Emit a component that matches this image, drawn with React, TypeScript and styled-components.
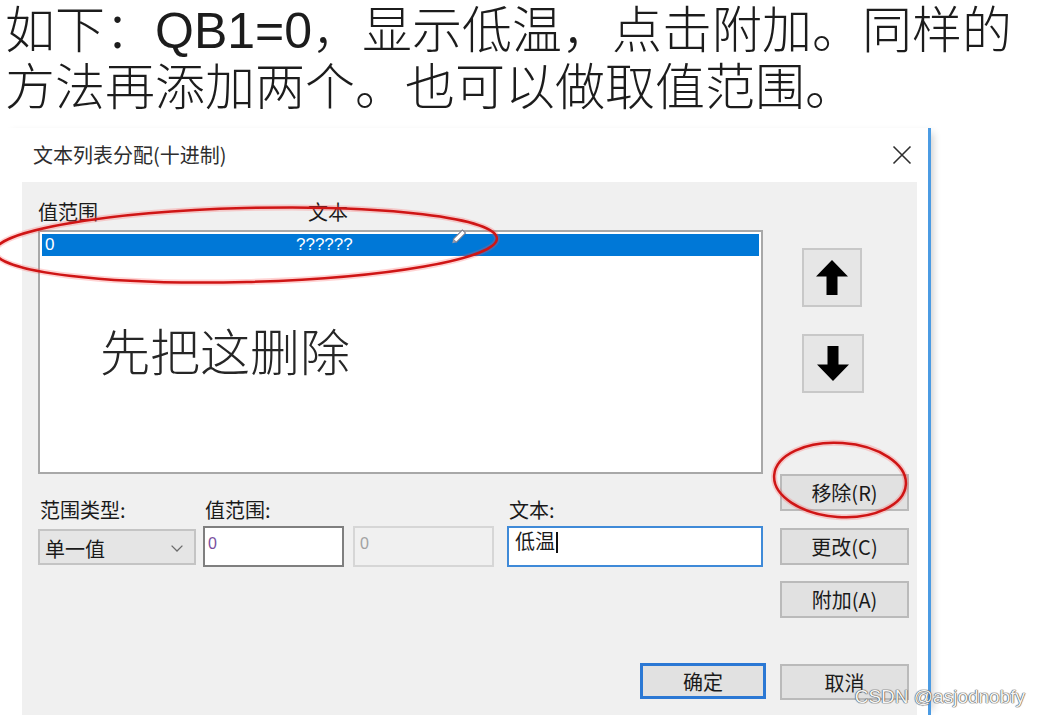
import React from 'react';
import styled, { createGlobalStyle } from 'styled-components';

const GlobalStyle = createGlobalStyle`
  html, body {
    margin: 0;
    padding: 0;
    background: #fff;
  }
  body {
    width: 1037px;
    height: 715px;
    overflow: hidden;
  }
`;

const uiFont = `"Noto Sans CJK SC", "Liberation Sans", sans-serif`;

const ArrowIcon = ({ down }: { down?: boolean }) => (
  <svg width="32" height="35" viewBox="0 0 32 35" style={{ transform: down ? 'rotate(180deg)' : undefined }}>
    <polygon points="16,0 32,16.5 21.5,16.5 21.5,35 10.5,35 10.5,16.5 0,16.5" fill="#000" />
  </svg>
);

const App = () => {
  return (
    <>
      <GlobalStyle />
      <Page>
        <Caption>
          如下：QB1=0，显示低温，点击附加。同样的
          <br />
          方法再添加两个。也可以做取值范围。
        </Caption>

        <Window>
          <TitleBar>
            <Title>文本列表分配(十进制)</Title>
            <svg width="20" height="20" viewBox="0 0 20 20">
              <path d="M1.5 1.5 L18.5 18.5 M18.5 1.5 L1.5 18.5" stroke="#2e2e2e" strokeWidth="1.6" />
            </svg>
          </TitleBar>

          <Client>
            <LeftColumn>
              <Headers>
                <HeaderCell width={270}>值范围</HeaderCell>
                <HeaderCell>文本</HeaderCell>
              </Headers>
              <ListBox>
                <SelectedRow>
                  <RowCell width={251}>0</RowCell>
                  <RowCell>??????</RowCell>
                </SelectedRow>
                <Note>先把这删除</Note>
              </ListBox>

              <FieldsRow>
                <Field>
                  <Label>范围类型:</Label>
                  <Combo>
                    <span>单一值</span>
                    <svg width="12" height="7" viewBox="0 0 12 7">
                      <polyline points="0.6,0.6 6,6 11.4,0.6" fill="none" stroke="#6b6b6b" strokeWidth="1.3" />
                    </svg>
                  </Combo>
                </Field>
                <Field offset={7}>
                  <Label>值范围:</Label>
                  <TextBox width={141} variant="plain">0</TextBox>
                </Field>
                <Field offset={9}>
                  <Label />
                  <TextBox width={141} variant="disabled">0</TextBox>
                </Field>
                <Field offset={13}>
                  <Label>文本:</Label>
                  <TextBox width={256} variant="focused">
                    低温<Caret />
                  </TextBox>
                </Field>
              </FieldsRow>

              <DefaultButton>确定</DefaultButton>
            </LeftColumn>

            <RightColumn>
              <ArrowButton top={66} width={60}>
                <ArrowIcon />
              </ArrowButton>
              <ArrowButton top={27} width={62}>
                <ArrowIcon down />
              </ArrowButton>
              <CmdButton top={81}>移除(R)</CmdButton>
              <CmdButton top={17}>更改(C)</CmdButton>
              <CmdButton top={16}>附加(A)</CmdButton>
              <CmdButton top={46} height={36}>取消</CmdButton>
            </RightColumn>
          </Client>
        </Window>

        <Annotations width="1037" height="715" viewBox="0 0 1037 715">
          <g fill="none">
            <ellipse cx="246" cy="245" rx="251" ry="37" transform="rotate(-1.5 246 245)" stroke="#ff5050" strokeOpacity="0.25" strokeWidth="6" />
            <ellipse cx="246" cy="245" rx="251" ry="37" transform="rotate(-1.5 246 245)" stroke="#cf1515" strokeWidth="2.5" />
            <ellipse cx="840" cy="480" rx="66" ry="37" transform="rotate(4 840 480)" stroke="#ff5050" strokeOpacity="0.25" strokeWidth="6" />
            <ellipse cx="840" cy="480" rx="66" ry="37" transform="rotate(4 840 480)" stroke="#cf1515" strokeWidth="2.5" />
          </g>
          <g transform="translate(459 236.5) rotate(-45)">
            <rect x="-6" y="-2.2" width="13" height="4.4" fill="#fff" stroke="#7a7a8a" strokeWidth="1" />
            <polygon points="-6,-2.2 -9.5,0 -6,2.2" fill="#9a9aaa" />
          </g>
        </Annotations>

        <Watermark>CSDN @asjodnobfy</Watermark>
      </Page>
    </>
  );
};

// css styles
const Page = styled.div`
  position: relative;
  width: 1037px;
  height: 715px;
  overflow: hidden;
  background: #fff;
  display: flex;
  flex-direction: column;
`;

const Caption = styled.p`
  margin: 0;
  height: 128px;
  flex: none;
  box-sizing: border-box;
  padding: 3px 0 0 5px;
  font-family: "Liberation Sans", "Noto Sans CJK SC", sans-serif;
  font-size: 50px;
  font-weight: 300;
  line-height: 57px;
  color: #1c1c1c;
  white-space: nowrap;
`;

const Window = styled.section`
  flex: 1;
  width: 931px;
  box-sizing: border-box;
  display: flex;
  flex-direction: column;
  background: #fff;
  border-right: 3px solid #4b9be3;
  box-shadow: 7px 0 8px -5px rgba(0, 0, 0, 0.2);
`;

const TitleBar = styled.div`
  height: 54px;
  flex: none;
  display: flex;
  align-items: center;
  justify-content: space-between;
  padding: 0 16px 0 33px;
`;

const Title = styled.div`
  font-family: ${uiFont};
  font-size: 20px;
  line-height: 28px;
  color: #2e2e2e;
`;

const Client = styled.div`
  flex: 1;
  display: flex;
  gap: 14px;
  margin: 0 11px 0 22px;
  padding: 0 8px 0 16px;
  background: #f0f0f0;
  font-family: ${uiFont};
  color: #1a1a1a;
`;

const LeftColumn = styled.div`
  width: 728px;
  display: flex;
  flex-direction: column;
`;

const Headers = styled.div`
  display: flex;
  margin-top: 16px;
  height: 28px;
  font-size: 20px;
  line-height: 28px;
`;

const HeaderCell = styled.div<{ width?: number }>`
  width: ${(p) => (p.width ? `${p.width}px` : 'auto')};
`;

const ListBox = styled.div`
  margin-top: 4px;
  width: 725px;
  height: 244px;
  box-sizing: border-box;
  border: 2px solid #a8a8a8;
  padding: 2px;
  background: #fff;
  display: flex;
  flex-direction: column;
`;

const SelectedRow = styled.div`
  height: 22px;
  display: flex;
  align-items: center;
  background: #0078d7;
  color: #fff;
  font-family: "Liberation Sans", sans-serif;
  font-size: 17px;
`;

const RowCell = styled.div<{ width?: number }>`
  width: ${(p) => (p.width ? `${p.width}px` : 'auto')};
  padding-left: 3px;
  box-sizing: border-box;
`;

const Note = styled.div`
  margin: 68px 0 0 58px;
  font-size: 50px;
  line-height: 50px;
  font-weight: 300;
  color: #262626;
`;

const FieldsRow = styled.div`
  display: flex;
  align-items: flex-start;
  margin-top: 22px;
`;

const Field = styled.div<{ offset?: number }>`
  display: flex;
  flex-direction: column;
  margin-left: ${(p) => p.offset ?? 0}px;
`;

const Label = styled.div`
  height: 28px;
  padding-left: 2px;
  font-size: 20px;
  line-height: 28px;
`;

const Combo = styled.div`
  margin-top: 5px;
  width: 158px;
  height: 36px;
  box-sizing: border-box;
  display: flex;
  align-items: center;
  justify-content: space-between;
  padding: 2px 11px 0 5px;
  border: 2px solid #c4c4c4;
  background: #e5e5e5;
  font-size: 20px;
`;

const boxStyles = {
  plain: { border: '#7f7f7f', bg: '#fff', color: '#7a4f9e', font: '"Liberation Sans", sans-serif', size: 16, pad: '4px 0 0 3px' },
  disabled: { border: '#d6d6d6', bg: '#f0f0f0', color: '#a2a2a2', font: '"Liberation Sans", sans-serif', size: 16, pad: '4px 0 0 5px' },
  focused: { border: '#3f8ad8', bg: '#fff', color: '#1a1a1a', font: uiFont, size: 20, pad: '1px 0 0 6px' },
};

const TextBox = styled.div<{ width: number; variant: keyof typeof boxStyles }>`
  margin-top: 2px;
  width: ${(p) => p.width}px;
  height: 41px;
  box-sizing: border-box;
  border: 2px solid ${(p) => boxStyles[p.variant].border};
  background: ${(p) => boxStyles[p.variant].bg};
  color: ${(p) => boxStyles[p.variant].color};
  font-family: ${(p) => boxStyles[p.variant].font};
  font-size: ${(p) => boxStyles[p.variant].size}px;
  line-height: 24px;
  padding: ${(p) => boxStyles[p.variant].pad};
`;

const Caret = styled.span`
  display: inline-block;
  width: 1.5px;
  height: 21px;
  margin-left: 1px;
  vertical-align: -4px;
  background: #111;
`;

const buttonBase = `
  box-sizing: border-box;
  display: flex;
  align-items: center;
  justify-content: center;
  font-size: 20px;
  color: #1a1a1a;
  background: #e1e1e1;
`;

const DefaultButton = styled.div`
  ${buttonBase}
  align-self: flex-end;
  margin-top: 96px;
  width: 126px;
  height: 36px;
  border: 3px solid #2b78d4;
`;

const RightColumn = styled.div`
  width: 129px;
  display: flex;
  flex-direction: column;
  align-items: flex-start;
`;

const ArrowButton = styled.div<{ top: number; width: number }>`
  ${buttonBase}
  margin: ${(p) => p.top}px 0 0 22px;
  width: ${(p) => p.width}px;
  height: 59px;
  border: 2px solid #c8c8c8;
  background: #e6e6e6;
`;

const CmdButton = styled.div<{ top: number; height?: number }>`
  ${buttonBase}
  margin-top: ${(p) => p.top}px;
  width: 129px;
  height: ${(p) => p.height ?? 37}px;
  border: 2px solid #bababa;
`;

const Annotations = styled.svg`
  position: absolute;
  left: 0;
  top: 0;
  pointer-events: none;
`;

const Watermark = styled.div`
  position: absolute;
  right: 12px;
  bottom: 8px;
  font-family: "Liberation Sans", sans-serif;
  font-size: 19px;
  line-height: 20px;
  color: #f4f4f4;
  text-shadow: 0 0 1px #4a4a4a, 0 0 1px #4a4a4a, 0 0 1px #4a4a4a;
`;

export default App;
